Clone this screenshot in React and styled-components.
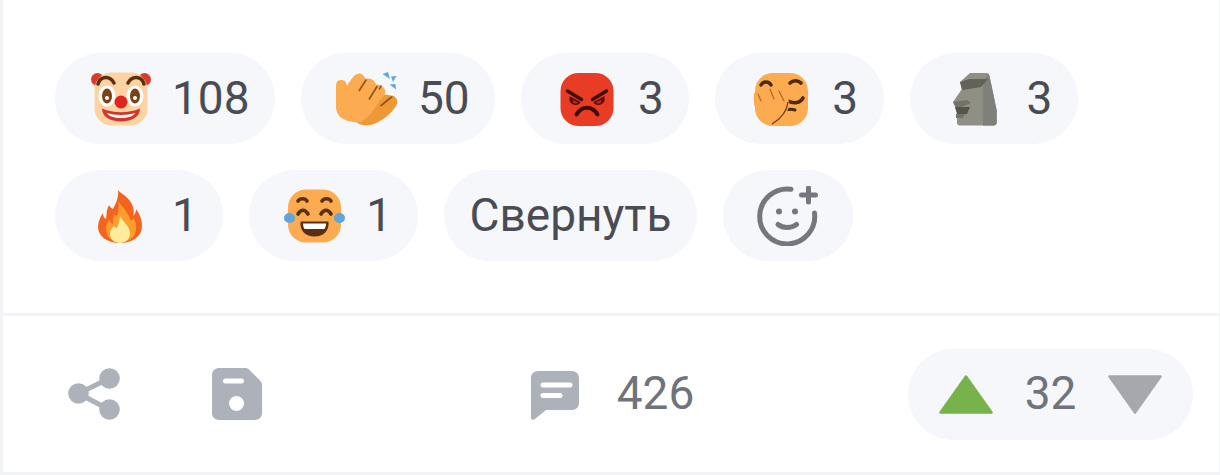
import React from 'react'
import styled, { createGlobalStyle } from 'styled-components'

const GlobalStyle = createGlobalStyle`
  html, body {
    margin: 0;
    padding: 0;
    background: #fff;
  }
`

function Clown() {
  return (
    <svg width="60" height="60" viewBox="0 0 60 60" overflow="visible">
      <circle cx="6.500" cy="10.500" r="6.500" fill="#dd3b2a" />
      <circle cx="53.500" cy="10.500" r="6.500" fill="#dd3b2a" />
      <rect x="3.500" y="3.500" width="53" height="53" rx="17" fill="#fdd3a3" />
      <path d="M7 15c2-8 12-9 16-1M37 14c4-8 14-7 16 1" fill="none" stroke="#5f3010" strokeWidth="3.600" strokeLinecap="round" />
      <ellipse cx="16" cy="27" rx="8.500" ry="10.500" fill="#fff" />
      <ellipse cx="44" cy="27" rx="8.500" ry="10.500" fill="#fff" />
      <ellipse cx="16" cy="27" rx="5" ry="7.500" fill="#7a4216" />
      <ellipse cx="44" cy="27" rx="5" ry="7.500" fill="#7a4216" />
      <circle cx="16" cy="29" r="2" fill="#fff" />
      <circle cx="44" cy="29" r="2" fill="#fff" />
      <path d="M11 39.500c12 5 26 5 38 0c0 8-8 13-19 13S11 47.500 11 39.500z" fill="#d4342a" />
      <path d="M15.500 44c9 2.500 20 2.500 29 0c-2 3-8 5-14.500 5S17.500 47 15.500 44z" fill="#fff" />
      <circle cx="30" cy="33" r="6.500" fill="#e3231f" />
    </svg>
  )
}

function Clap() {
  return (
    <svg width="60" height="60" viewBox="0 0 60 60" overflow="visible">
      <path d="M19 53c4 3 9 4 14 3c10-2 22-11 27-21c1-3 0-6-3-8L40 24z" fill="#ef9838" />
      <path d="M-1 38V17c0-4 2-6 5-6c4 0 5 2 6 6c2-4 5-8 8-11c3-2 6-2 8 0c1 1 2 3 3 4c3-1 6 0 8 2c1 1 2 3 2 4c2-1 5 0 7 2c2 2 3 4 2 6c-1 3-3 5-5 7C38 40 32 48 24 53c-3 1-8 0-13-1C4 50-1 45-1 38z" fill="#fcab50" />
      <path d="M22.300 21.500L29 11M32.300 30L40 17.500M44 36.500L54.700 28M44 17l-1.500 3" fill="none" stroke="#8f5416" strokeWidth="1.600" strokeLinecap="round" />
      <path d="M45.500 5l5.500-2l2 7zM54 7.500l5.500-.5l-3.500 6zM52.500 15.500l6-.5l.5 5.500z" fill="#5ea8e0" />
    </svg>
  )
}

function Angry() {
  return (
    <svg width="60" height="60" viewBox="0 0 60 60">
      <rect x="3.500" y="4" width="53" height="53" rx="18" fill="#e83c24" />
      <path d="M12.500 27l11 6c-1 4-9 4-11-1zM47.500 27l-11 6c1 4 9 4 11-1z" fill="#5a0e0b" />
      <path d="M16 31l5 2.500c-1 1.500-4 1.500-5-.5zM44 31l-5 2.500c1 1.500 4 1.500 5-.5z" fill="#c3261a" />
      <path d="M10.500 22l14 8.500M49.500 22l-14 8.500" fill="none" stroke="#3f0c09" strokeWidth="3.400" strokeLinecap="round" />
      <path d="M19.500 45.500c5-9 16-9 21 0" fill="none" stroke="#3f0c09" strokeWidth="4" strokeLinecap="round" />
    </svg>
  )
}

function Facepalm() {
  return (
    <svg width="60" height="60" viewBox="0 0 60 60" overflow="visible">
      <rect x="4" y="4" width="53" height="53" rx="18" fill="#fcab50" />
      <path d="M39 14c3-3 8-3 11 0M52 29c-3 5-9 6-15 3" fill="none" stroke="#4b2a10" strokeWidth="3.600" strokeLinecap="round" />
      <path d="M35 41c3-1 6-1 9 0" fill="none" stroke="#4b2a10" strokeWidth="3" strokeLinecap="round" />
      <path d="M3 24c2-2 4-1 6 1c2-6 9-8 13-6c3-1 6 0 8 3c3-1 6 1 7 5c2 8 1 16-6 23c-5 4-11 6-15 5C8 52 1 38 3 24z" fill="#fcab50" />
      <path d="M10 16c2-4 8-4 10 0" fill="none" stroke="#4b2a10" strokeWidth="3.400" strokeLinecap="round" />
      <path d="M19 20l4 10M28 22l5 10M7 25l3 7" fill="none" stroke="#b8651a" strokeWidth="1.200" strokeLinecap="round" />
      <path d="M37 33c-1 9-6 16-16 22" fill="none" stroke="#6b3a12" strokeWidth="1.300" />
    </svg>
  )
}

function Moai() {
  return (
    <svg width="60" height="60" viewBox="0 0 60 60">
      <path d="M24 4h17c1 0 2 1 2.500 3l7.200 34.500V53c0 2-1 3.500-3 3.500H14c-2 0-3-1-3-3V43l-4-10l9-13l-2-7z" fill="#8f8f84" />
      <path d="M37 14l5-9l1.500 2l7.200 34.500V53c0 2-1 3.500-3 3.500H37z" fill="#80807a" />
      <path d="M14 13l9-3h19l-7 8l-6 1l-13 2z" fill="#62625a" />
      <path d="M7 33l14-2l4 3l-10 4h-5z" fill="#73736a" />
      <path d="M9 38h15l-3 7h-10z" fill="#55554d" />
      <path d="M10 45h9l-2 4h-7z" fill="#73736a" />
    </svg>
  )
}

function Fire() {
  return (
    <svg width="60" height="60" viewBox="0 0 60 60">
      <path d="M27 4c3 4 12 7 15 17c1 3 1 6 0 9c2-2 3-4 3-7c4 5 6 11 6 17c0 10-9 17-22 17S7 50 7 41c0-5 2-10 5-14c0 3 1 5 3 6c1-6 0-8 3-14c1 2 2 3 4 4c3-6 6-12 5-19z" fill="#f4641f" />
      <path d="M27 15c2 4 9 9 12 18c1 3 3 1 3-1c3 3 3 7 3 10c0 9-7 14-15 14S15 52 15 43c0-5 2-7 4-9c0 2 1 3 3 4c0-4 0-7 1-10c1 1 2 2 3 2c2-5 2-10 1-15z" fill="#fc9d2c" />
      <path d="M29 30c2 5 10 10 10 17c0 6-4 10-10 10s-10-4-10-9c0-4 2-6 4-8c1 1 2 2 3 2c1-4 3-8 3-12z" fill="#fdec9e" />
    </svg>
  )
}

function Laugh() {
  return (
    <svg width="60" height="60" viewBox="0 0 60 60" overflow="visible">
      <rect x="3" y="3.500" width="53" height="53" rx="18" fill="#fcab50" />
      <path d="M13 15c2-3 7-3 9 0M37 15c2-3 7-3 9 0M13 28c3-5 7-5 10 0M36 28c3-5 7-5 10 0" fill="none" stroke="#5a2f0e" strokeWidth="3.600" strokeLinecap="round" />
      <path d="M15.500 35.500h28c1 9-5 15-14 15s-15-6-14-15z" fill="#5a2f0e" />
      <path d="M18 37.500h23c0 2-.5 4-1.500 5.500H19.500c-1-1.500-1.500-3.500-1.500-5.500z" fill="#fff" />
      <ellipse cx="4.500" cy="32" rx="5.500" ry="5" fill="#60a5dd" />
      <ellipse cx="54.500" cy="32" rx="5.500" ry="5" fill="#60a5dd" />
    </svg>
  )
}

function SmilePlus() {
  return (
    <svg width="61" height="60" viewBox="0 0 61 60">
      <path d="M34 3.200A27.500 27.500 0 1 0 57.500 27" fill="none" stroke="#75777f" strokeWidth="5" strokeLinecap="round" />
      <path d="M51.500 2v14M44.500 9h14" fill="none" stroke="#75777f" strokeWidth="5" strokeLinecap="round" />
      <circle cx="22" cy="25.500" r="3" fill="#75777f" />
      <circle cx="38" cy="25.500" r="3" fill="#75777f" />
      <path d="M21 38.500c5 4 13 4 18.500 0" fill="none" stroke="#75777f" strokeWidth="5" strokeLinecap="round" />
    </svg>
  )
}

function ShareIcon() {
  return (
    <svg width="52" height="52" viewBox="0 0 52 52">
      <path d="M41 10.500L10.500 25.500L41 41.500" fill="none" stroke="#adb1b9" strokeWidth="5" />
      <circle cx="41.500" cy="10.500" r="10.300" fill="#adb1b9" />
      <circle cx="10.500" cy="25.500" r="10.300" fill="#adb1b9" />
      <circle cx="41.500" cy="41.500" r="10.300" fill="#adb1b9" />
    </svg>
  )
}

function SaveIcon() {
  return (
    <svg width="50" height="52" viewBox="0 0 50 52">
      <path d="M7 0h26c2 0 3 .5 4.500 2l10 10c1.500 1.500 2.500 3 2.500 5v28c0 4-3 7-7 7H7c-4 0-7-3-7-7V7c0-4 3-7 7-7z" fill="#adb1b9" />
      <rect x="11" y="10.500" width="21" height="5" rx="2.500" fill="#fff" />
      <circle cx="24.500" cy="35.500" r="7.500" fill="#fff" />
    </svg>
  )
}

function CommentIcon() {
  return (
    <svg width="50" height="53" viewBox="0 -3 50 53">
      <path d="M7 0h34c4 0 7 3 7 7v25c0 4-3 7-7 7H15L4 48c-2 1.500-4 1-4-1.500V7c0-4 3-7 7-7z" fill="#adb1b9" />
      <path d="M12 14h27M12 24.500h17" fill="none" stroke="#fff" strokeWidth="5" strokeLinecap="round" />
    </svg>
  )
}

function Triangle({ down, color }) {
  return (
    <svg width="54" height="39" viewBox="0 0 54 39">
      <path
        d={down ? 'M1.500 1.500h51L27 37.500z' : 'M27 1.500L52.500 37.500h-51z'}
        fill={color}
        stroke={color}
        strokeWidth="2.500"
        strokeLinejoin="round"
      />
    </svg>
  )
}

const reactions = [
  [{ icon: <Clown />, count: 108 }, { icon: <Clap />, count: 50 }, { icon: <Angry />, count: 3 }, { icon: <Facepalm />, count: 3 }, { icon: <Moai />, count: 3 }],
  [{ icon: <Fire />, count: 1 }, { icon: <Laugh />, count: 1 }],
]

function Reaction({ icon, count }) {
  return (
    <Pill>
      <EmojiBox>{icon}</EmojiBox>
      <PillText>{count}</PillText>
    </Pill>
  )
}

export default function App() {
  return (
    <Card>
      <GlobalStyle />
      <Reactions>
        <Row>
          {reactions[0].map((r, i) => <Reaction key={i} {...r} />)}
        </Row>
        <Row>
          {reactions[1].map((r, i) => <Reaction key={i} {...r} />)}
          <Pill><PillText>Свернуть</PillText></Pill>
          <AddPill><SmilePlus /></AddPill>
        </Row>
      </Reactions>
      <Footer>
        <Actions>
          <IconButton><ShareIcon /></IconButton>
          <IconButton><SaveIcon /></IconButton>
        </Actions>
        <Comments>
          <IconButton><CommentIcon /></IconButton>
          <Count>426</Count>
        </Comments>
        <Votes>
          <Triangle color="#78b24a" />
          <Count>32</Count>
          <Triangle down color="#a6a8ad" />
        </Votes>
      </Footer>
    </Card>
  )
}

const Card = styled.div`
  box-sizing: border-box;
  width: 1220px;
  height: 475px;
  background: #fff;
  border-left: 3px solid #f2f3f6;
  border-right: 1px solid #f2f3f6;
  border-bottom: 3px solid #f2f3f6;
  font-family: Roboto, sans-serif;
  overflow: hidden;
`

const Reactions = styled.div`
  display: flex;
  flex-direction: column;
  gap: 26px;
  height: 316px;
  box-sizing: border-box;
  padding: 53px 0 0 52px;
  border-bottom: 3px solid #f2f3f6;
`

const Row = styled.div`
  display: flex;
  gap: 26px;
`

const Pill = styled.div`
  display: flex;
  align-items: center;
  height: 91px;
  padding: 0 25.4px 0 26px;
  border-radius: 46px;
  background: #f6f7fb;
`

const AddPill = styled(Pill)`
  width: 130px;
  box-sizing: border-box;
  padding: 0;
  justify-content: center;
  svg {
    display: block;
  }
`

const EmojiBox = styled.span`
  display: flex;
  justify-content: center;
  width: 80px;
  margin-right: 11px;
  svg {
    display: block;
  }
`

const PillText = styled.span`
  font-size: 46px;
  line-height: 52px;
  color: #4a4c53;
  margin-bottom: 2px;
`

const Footer = styled.div`
  display: grid;
  grid-template-columns: 1fr auto 1fr;
  align-items: center;
  height: 156px;
  padding: 0 26px;
  box-sizing: border-box;
`

const Actions = styled.div`
  display: flex;
  gap: 92px;
  align-items: center;
  padding-left: 39px;
`

const IconButton = styled.span`
  display: flex;
  svg {
    display: block;
  }
`

const Comments = styled.div`
  display: flex;
  align-items: center;
  gap: 36px;
  padding-left: 3px;
`

const Count = styled.span`
  font-size: 46px;
  line-height: 52px;
  color: #6f737b;
  margin-bottom: 2px;
`

const Votes = styled.div`
  justify-self: end;
  display: flex;
  align-items: center;
  gap: 31.6px;
  height: 91px;
  padding: 0 31px;
  border-radius: 46px;
  background: #f6f7fb;
`
